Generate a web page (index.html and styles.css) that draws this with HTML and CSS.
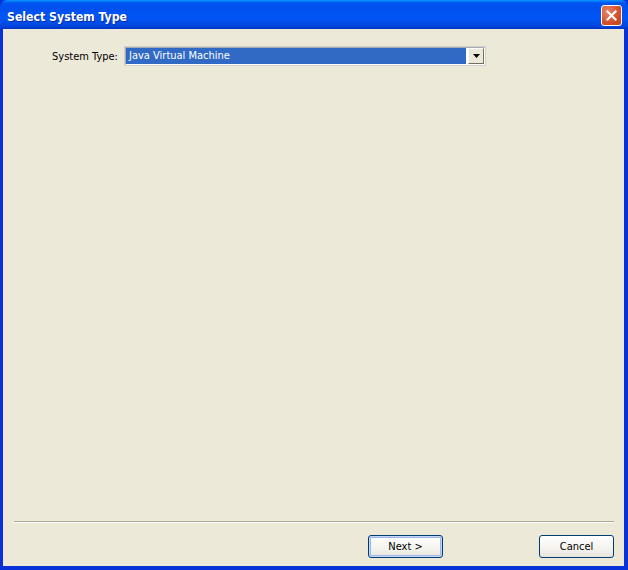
FILE: index.html
```html
<!DOCTYPE html>
<html>
<head>
<meta charset="utf-8">
<link rel="stylesheet" href="styles.css">
</head>
<body>
<div class="window">
  <div class="titlebar">
    <span class="title">Select System Type</span>
    <div class="close">
      <svg width="21" height="21" viewBox="0 0 21 21">
        <path d="M6 6 L15 15 M15 6 L6 15" stroke="#fff" stroke-width="2.2" stroke-linecap="square"/>
      </svg>
    </div>
  </div>
  <div class="frame">
    <div class="content">
      <div class="row">
        <span class="label">System Type:</span>
        <div class="combo">
          <span class="combo-value">Java Virtual Machine</span>
          <span class="combo-btn">
            <svg width="7" height="4" viewBox="0 0 7 4"><path d="M0 0 H7 L3.5 4 Z" fill="#000"/></svg>
          </span>
        </div>
      </div>
    </div>
    <div class="footer">
      <div class="sep"></div>
      <div class="buttons">
        <button class="btn default">Next &gt;</button>
        <button class="btn">Cancel</button>
      </div>
    </div>
  </div>
</div>
</body>
</html>
```
FILE: styles.css
```css
html, body {
  margin: 0;
  padding: 0;
  width: 628px;
  height: 570px;
  overflow: hidden;
  font-family: Tahoma, "DejaVu Sans Condensed", "DejaVu Sans", sans-serif;
}
.window {
  width: 628px;
  height: 570px;
  display: flex;
  flex-direction: column;
  background: #0831D9;
  box-sizing: border-box;
}
.titlebar {
  height: 29px;
  flex: none;
  display: flex;
  align-items: center;
  justify-content: space-between;
  padding: 0 6px 0 7px;
  border-radius: 7px 7px 0 0;
  background: linear-gradient(to bottom, #0997FF 0px, #0053EE 3px, #0050EE 8px, #0055F6 18px, #0147DD 26px, #0032C3 29px);
}
.title {
  color: #fff;
  font-family: "DejaVu Sans Condensed", "DejaVu Sans", sans-serif;
  font-weight: bold;
  font-size: 12.2px;
  text-shadow: 1px 1px 0 #0A2A9A;
  padding-top: 4px;
}
.close {
  width: 21px;
  height: 21px;
  border: 1px solid #fff;
  border-radius: 3px;
  box-sizing: border-box;
  background: radial-gradient(circle at 30% 30%, #E8856A, #D3502C 60%, #C1411C);
  display: flex;
  align-items: center;
  justify-content: center;
  margin-top: 1px;
}
.close svg { display: block; width: 19px; height: 19px; }
.frame {
  flex: 1;
  margin: 0 4px 4px 3px;
  background: #ECE9D8;
  display: flex;
  flex-direction: column;
}
.content {
  flex: 1;
  padding: 18px 0 0 49px;
}
.row {
  display: flex;
  align-items: center;
}
.label {
  font-size: 11px;
  color: #000;
  width: 73px;
}
.combo {
  width: 360px;
  height: 18px;
  box-sizing: border-box;
  border: 1px solid #fff;
  border-top-color: #A5ACB5;
  border-left-color: #A5ACB5;
  outline: 1px solid #D4D0C8;
  display: flex;
  align-items: stretch;
  background: #fff;
}
.combo-value {
  flex: 1;
  background: #316AC5;
  color: #fff;
  font-size: 11px;
  padding-left: 3px;
  line-height: 16px;
  margin: 0 2px 0 0;
}
.combo-btn {
  width: 16px;
  background: #ECE9D8;
  border: 1px solid #fff;
  border-right-color: #716F64;
  border-bottom-color: #716F64;
  box-sizing: border-box;
  display: flex;
  align-items: center;
  justify-content: center;
}
.combo-btn svg { display: block; }
.footer {
  flex: none;
  padding: 0 10px 8px 11px;
}
.sep {
  height: 0;
  border-top: 1px solid #ACA899;
  border-bottom: 1px solid #fff;
}
.buttons {
  display: flex;
  justify-content: flex-end;
  gap: 96px;
  margin-top: 12px;
}
.btn {
  width: 75px;
  height: 23px;
  font-family: Tahoma, "DejaVu Sans Condensed", "DejaVu Sans", sans-serif;
  font-size: 11px;
  color: #000;
  border: 1px solid #003C74;
  border-radius: 3px;
  background: linear-gradient(to bottom, #FFFFFF 0%, #F4F3EE 60%, #E5E3D9 100%);
  padding: 0;
}
.btn.default {
  box-shadow: inset 0 0 0 1px #C5D5F3, inset 0 0 0 2px #9DB9EB;
}
```
